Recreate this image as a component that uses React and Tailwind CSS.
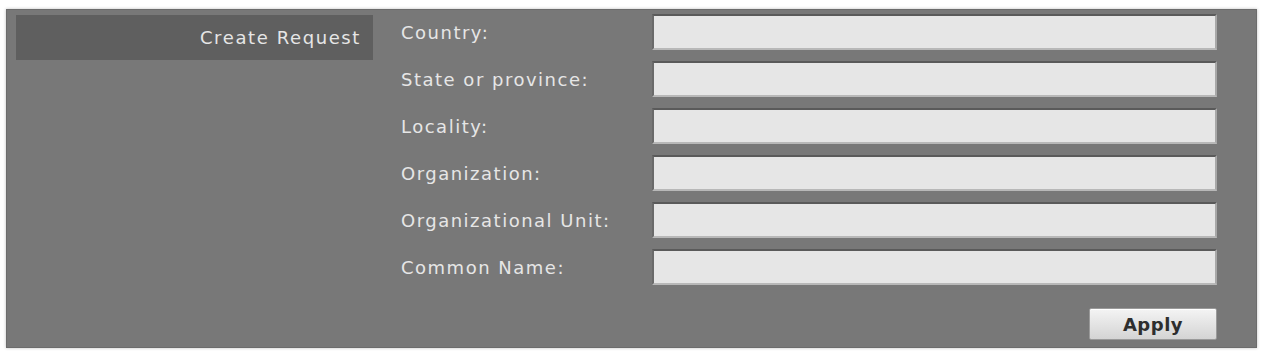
import React from 'react';

const fields = [
  'Country:',
  'State or province:',
  'Locality:',
  'Organization:',
  'Organizational Unit:',
  'Common Name:',
];

export default function App() {
  return (
    <div className="w-[1265px] h-[356px] bg-white pl-[6px] pt-[9px] font-['DejaVu_Sans',sans-serif]">
      <div className="w-[1251px] h-[339px] bg-[#787878] border border-[#6c6c6c] shadow-[0_0_3px_rgba(0,0,0,0.25)] flex pl-[9px] pt-[4px]">
        {/* sidebar */}
        <div className="w-[357px] shrink-0">
          <div className="h-[45px] mt-[1px] bg-[#5f5f5f] flex items-center justify-end pr-[12px] text-[18px] text-[#e6e6e6] tracking-[1.6px]">
            Create Request
          </div>
        </div>

        {/* form */}
        <div className="ml-[28px] w-[816px]">
          <div className="flex flex-col gap-[11px]">
            {fields.map((label) => (
              <div key={label} className="flex items-center h-[36px]">
                <label className="w-[251px] shrink-0 text-[18px] text-[#e6e6e6] tracking-[1.5px]">
                  {label}
                </label>
                <input
                  type="text"
                  className="w-[565px] h-[36px] bg-[#e6e6e6] border-2 border-t-[#5a5a5a] border-l-[#6a6a6a] border-b-[#b8b8b8] border-r-[#a8a8a8] outline-none"
                />
              </div>
            ))}
          </div>
          <div className="flex justify-end mt-[23px]">
            <button className="w-[128px] h-[32px] bg-gradient-to-b from-[#f4f4f4] to-[#d4d4d4] border border-[#9a9a9a] rounded-[2px] shadow-[inset_0_1px_0_#ffffff] text-[18px] font-bold text-[#2e2e2e] tracking-[0.5px]">
              Apply
            </button>
          </div>
        </div>
      </div>
    </div>
  );
}
